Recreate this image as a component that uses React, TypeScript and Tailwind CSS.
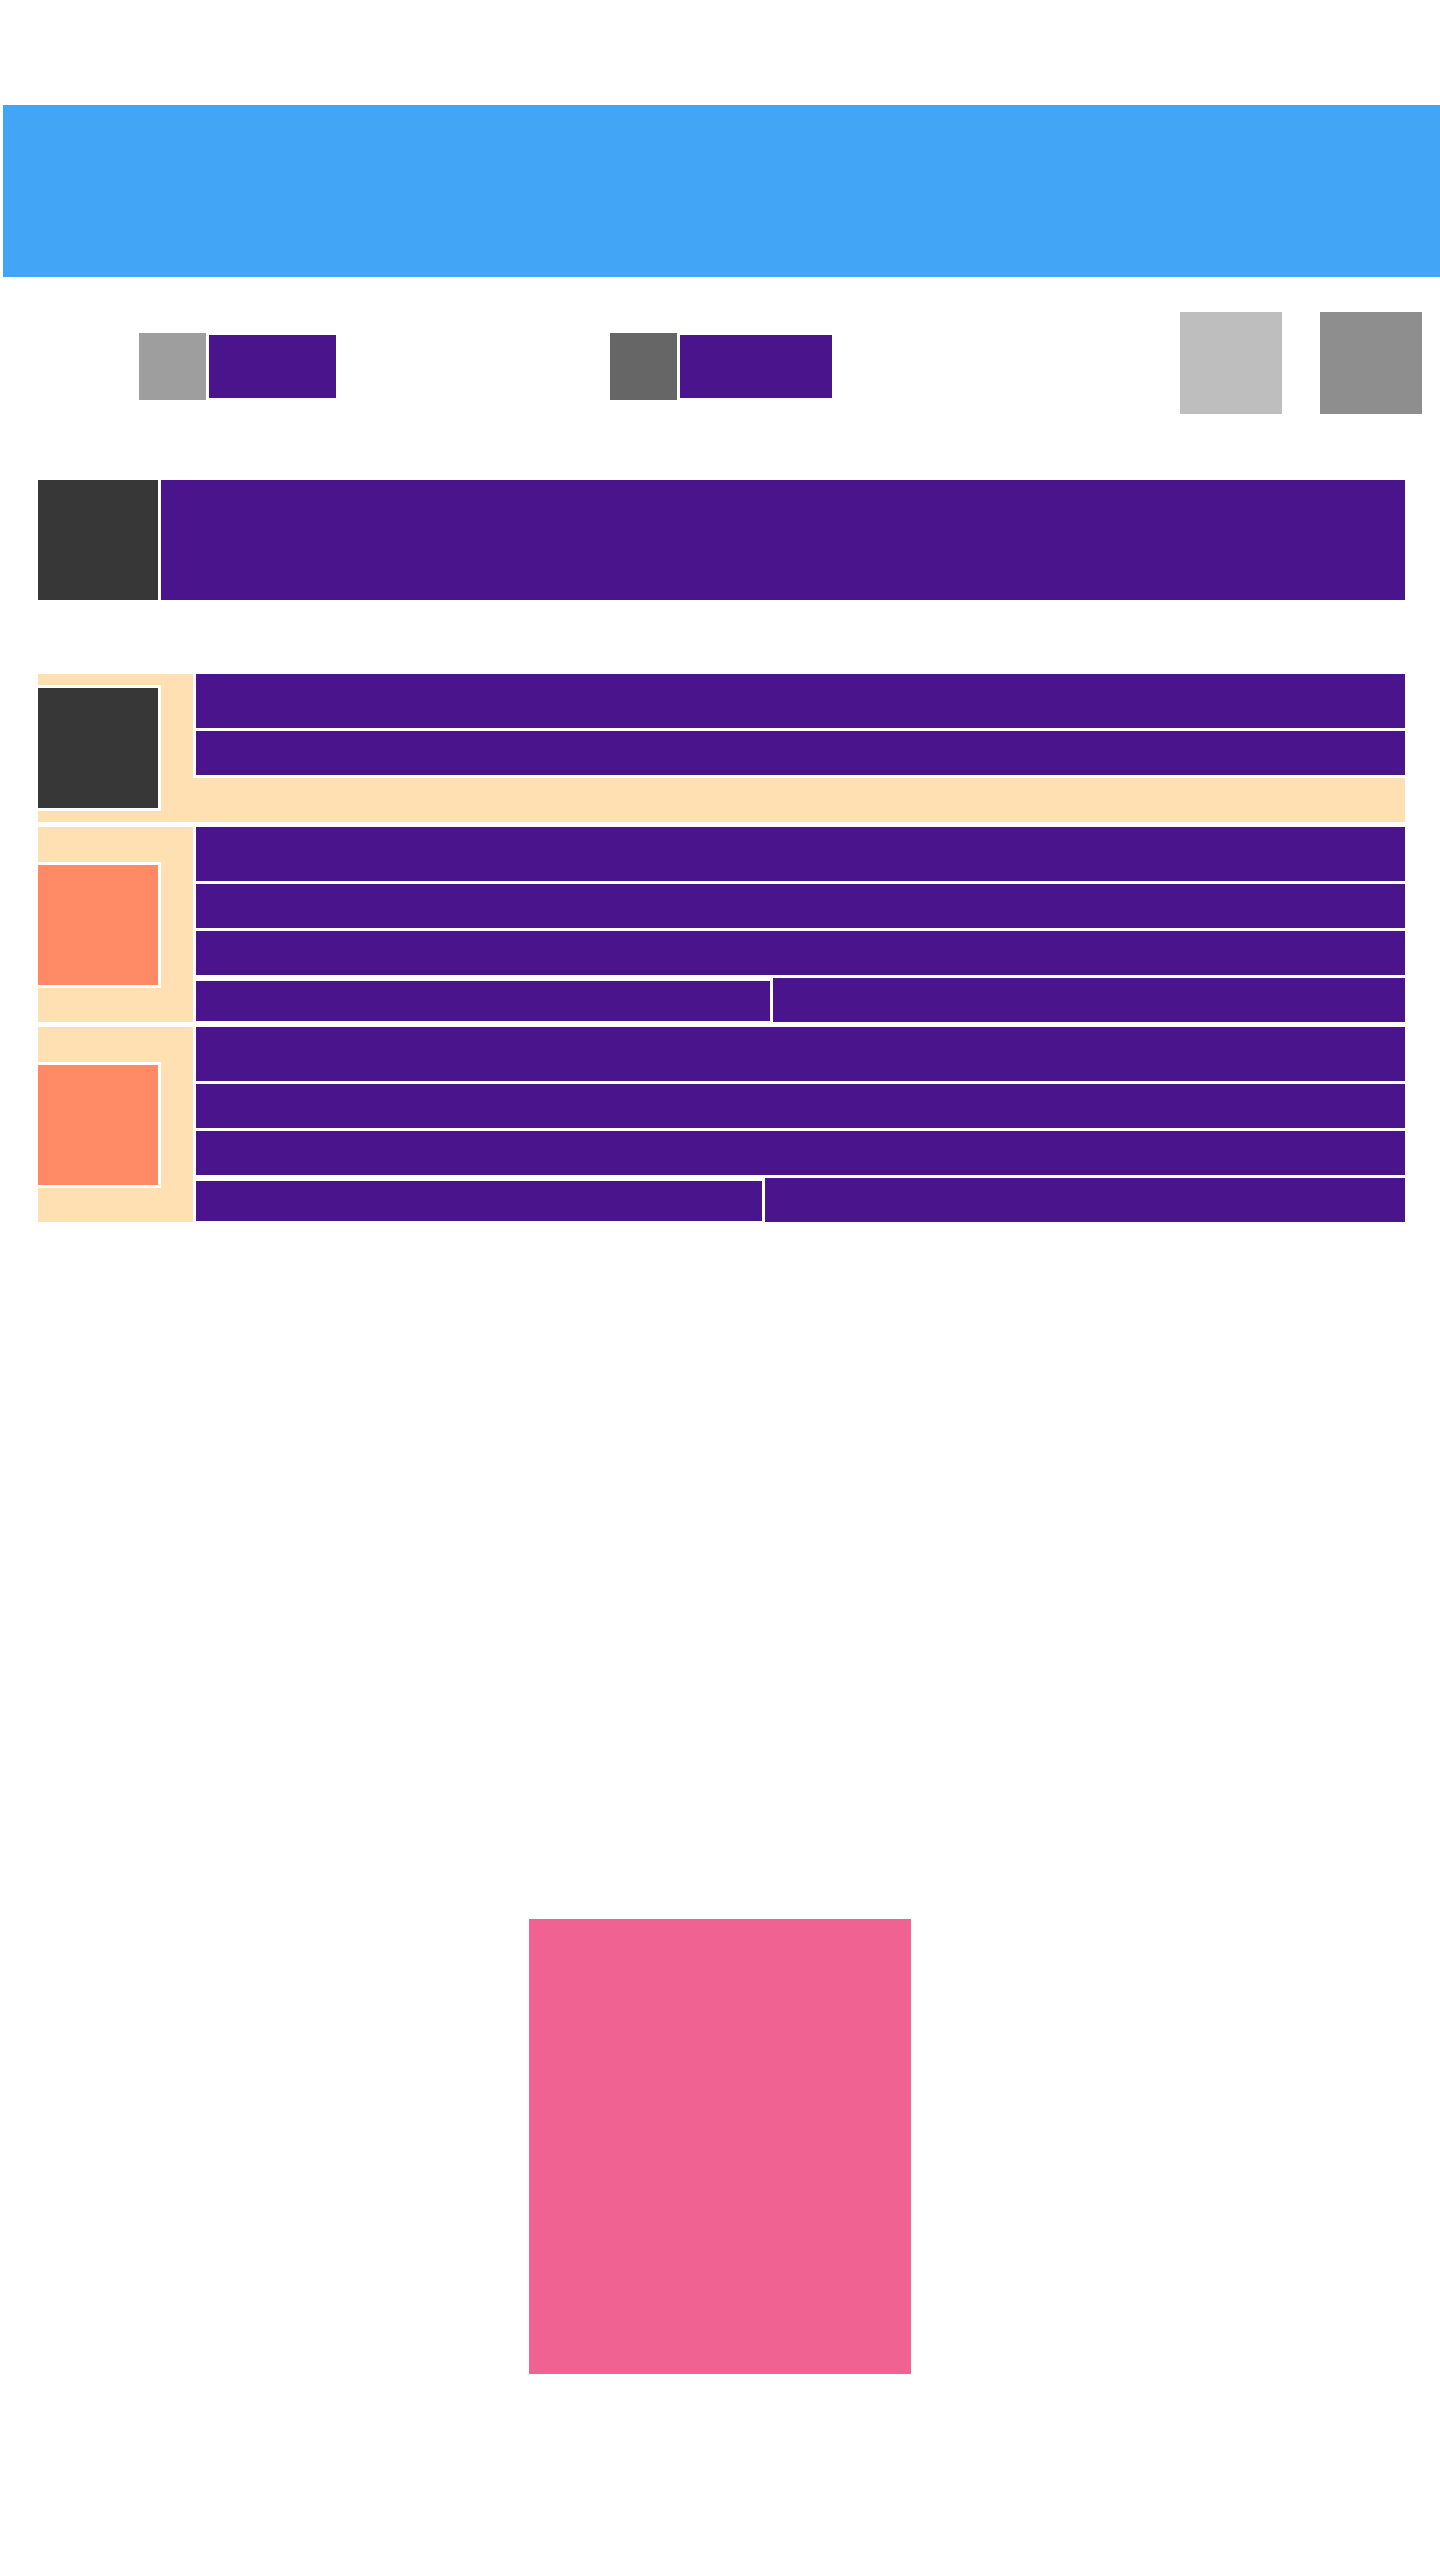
import React from 'react';

const PURPLE = 'bg-[#4A148C]';

function Thumb({ tone }: { tone: 'dark' | 'orange' }) {
  // box with a white frame on top, right and bottom
  return (
    <div
      className={`w-[123px] h-[126px] border-t-[3px] border-r-[3px] border-b-[3px] border-white ${
        tone === 'dark' ? 'bg-[#373737]' : 'bg-[#FF8A65]'
      }`}
    />
  );
}

function SplitRow({ left }: { left: number }) {
  return (
    <div className="flex gap-[3px] h-[44px] bg-white">
      <div className={`${PURPLE} mt-[3px] h-[40px]`} style={{ width: left }} />
      <div className={`${PURPLE} flex-1 h-full`} />
    </div>
  );
}

function FullRow() {
  return (
    <div className="flex bg-[#FFE0B2] h-[148px] items-start">
      <div className="w-[155px] h-full flex items-center">
        <Thumb tone="dark" />
      </div>
      <div className="flex-1 bg-white pl-[3px] pb-[3px] flex flex-col gap-[3px]">
        <div className={`${PURPLE} h-[54px]`} />
        <div className={`${PURPLE} h-[44px]`} />
      </div>
    </div>
  );
}

function ListRow({ split }: { split: number }) {
  return (
    <div className="flex h-[195px]">
      <div className="w-[155px] bg-[#FFE0B2] flex items-center">
        <Thumb tone="orange" />
      </div>
      <div className="flex-1 bg-white pl-[3px] flex flex-col gap-[3px]">
        <div className={`${PURPLE} h-[54px]`} />
        <div className={`${PURPLE} h-[44px]`} />
        <div className={`${PURPLE} h-[44px]`} />
        <SplitRow left={split} />
      </div>
    </div>
  );
}

export default function App() {
  return (
    <div className="w-[1440px] min-h-[2560px] bg-white flex flex-col">
      {/* banner */}
      <div className="ml-[3px] mt-[105px] h-[172px] bg-[#42A5F5]" />

      {/* toolbar */}
      <div className="flex items-start mt-[35px] h-[102px]">
        <div className="ml-[139px] mt-[21px] flex items-start gap-[3px]">
          <div className="w-[67px] h-[67px] bg-[#9E9E9E]" />
          <div className={`${PURPLE} w-[127px] h-[63px] mt-[2px]`} />
        </div>
        <div className="ml-[274px] mt-[21px] flex items-start gap-[3px]">
          <div className="w-[67px] h-[67px] bg-[#666666]" />
          <div className={`${PURPLE} w-[152px] h-[63px] mt-[2px]`} />
        </div>
        <div className="ml-auto mr-[18px] flex gap-[38px]">
          <div className="w-[102px] h-[102px] bg-[#BEBEBE]" />
          <div className="w-[102px] h-[102px] bg-[#8E8E8E]" />
        </div>
      </div>

      {/* header */}
      <div className="ml-[38px] w-[1367px] mt-[66px] flex gap-[3px] h-[120px]">
        <div className="w-[120px] h-full bg-[#373737]" />
        <div className={`${PURPLE} flex-1 h-full`} />
      </div>

      {/* list */}
      <div className="ml-[38px] w-[1367px] mt-[74px] flex flex-col gap-[5px]">
        <FullRow />
        <ListRow split={574} />
        <ListRow split={566} />
      </div>

      {/* card */}
      <div className="mx-auto mt-[697px] w-[382px] h-[455px] bg-[#F06292]" />
    </div>
  );
}
